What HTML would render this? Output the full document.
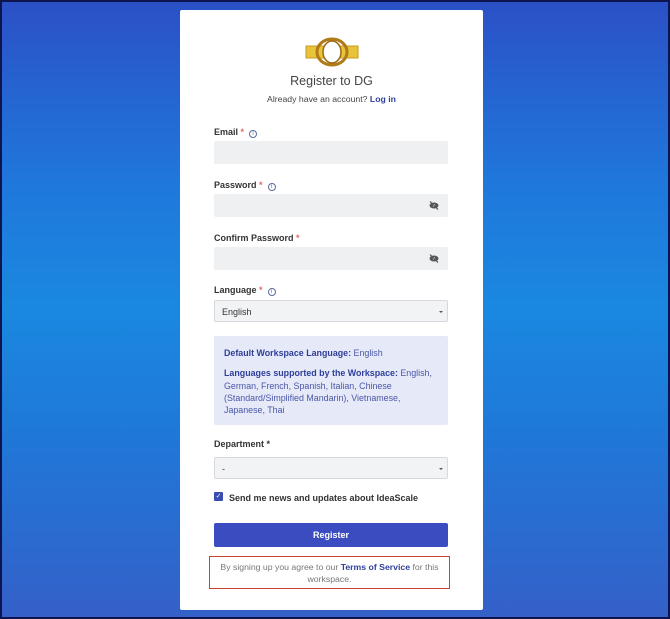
<!DOCTYPE html>
<html><head><style>
*{box-sizing:border-box;margin:0;padding:0}
body{width:670px;height:619px;overflow:hidden;font-family:"Liberation Sans",sans-serif;position:relative;
background:linear-gradient(180deg,#2b50c6 0%,#1f78dc 30%,#1a88e0 50%,#1f78d8 70%,#3460c8 100%);}
.frame{position:absolute;inset:0;border:2px solid #0d1450;}
.card{position:absolute;left:180px;top:10px;width:303px;height:600px;background:#fff;border-radius:2px}
.a{position:absolute}
.lbl{position:absolute;left:214px;font-size:9px;font-weight:bold;color:#333}
.lbl .r{color:#e06a6a}
.lbl .i{display:inline-block;width:8px;height:8px;border:1px solid #5a6a9a;border-radius:50%;font-size:6px;text-align:center;line-height:6px;color:#5a6a9a;margin-left:5px;font-weight:normal;vertical-align:0}
.in{position:absolute;left:214px;width:234px;height:23px;background:#eff0f2;border-radius:2px}
.sel{border:1px solid #d6d8de;background:#f2f3f5;font-size:9px;color:#333;padding:6px 7px}
.car{position:absolute;right:4px;top:10px;width:0;height:0;border-left:2px solid transparent;border-right:2px solid transparent;border-top:2px solid #555}
.eye{position:absolute;right:9px;top:7px}
</style></head><body>
<div class="card"></div>
<svg class="a" style="left:305px;top:37px" width="54" height="30" viewBox="0 0 54 30">
<rect x="1" y="9" width="52" height="12" fill="#e8c43a"/>
<rect x="1" y="9" width="52" height="12" fill="none" stroke="#c89a20" stroke-width="1"/>
<ellipse cx="27" cy="15" rx="15" ry="13" fill="none" stroke="#b07a18" stroke-width="3"/>
<ellipse cx="27" cy="15" rx="9" ry="11" fill="#fff" stroke="#9a6a12" stroke-width="1.5"/>
</svg>
<div class="a" style="left:180px;width:303px;top:74px;text-align:center;font-size:12.5px;color:#444">Register to DG</div>
<div class="a" style="left:180px;width:303px;top:94px;text-align:center;font-size:8.7px;color:#444">Already have an account? <b style="color:#2e3f9a">Log in</b></div>

<div class="lbl" style="top:127px">Email <span class="r">*</span><span class="i">i</span></div>
<div class="in" style="top:141px"></div>
<div class="lbl" style="top:180px">Password <span class="r">*</span><span class="i">i</span></div>
<div class="in" style="top:194px"><svg class="eye" width="10" height="9" viewBox="0 0 10 9"><ellipse cx="5" cy="4.5" rx="4.5" ry="3" fill="#555"/><circle cx="5" cy="4.5" r="1.2" fill="#eee"/><line x1="1" y1="0.5" x2="9" y2="8.5" stroke="#555" stroke-width="1.2"/></svg></div>
<div class="lbl" style="top:233px">Confirm Password <span class="r">*</span></div>
<div class="in" style="top:247px"><svg class="eye" width="10" height="9" viewBox="0 0 10 9"><ellipse cx="5" cy="4.5" rx="4.5" ry="3" fill="#555"/><circle cx="5" cy="4.5" r="1.2" fill="#eee"/><line x1="1" y1="0.5" x2="9" y2="8.5" stroke="#555" stroke-width="1.2"/></svg></div>
<div class="lbl" style="top:285px">Language <span class="r">*</span><span class="i">i</span></div>
<div class="in sel" style="top:300px;height:22px">English<span class="car"></span></div>

<div class="a" style="left:214px;top:336px;width:234px;height:89px;background:#e6e9f8;border-radius:2px;padding:11px 10px;font-size:8.9px;line-height:12.3px;color:#4a57a8">
<div><b style="color:#2e3f9a">Default Workspace Language:</b> English</div>
<div style="margin-top:8px"><b style="color:#2e3f9a">Languages supported by the Workspace:</b> English, German, French, Spanish, Italian, Chinese (Standard/Simplified Mandarin), Vietnamese, Japanese, Thai</div>
</div>

<div class="lbl" style="top:439px">Department *</div>
<div class="in sel" style="top:457px;height:22px">-<span class="car"></span></div>

<div class="a" style="left:214px;top:492px;width:9px;height:9px;background:#3a4cb0;border-radius:1px;color:#fff;font-size:7px;line-height:9px;text-align:center">✓</div>
<div class="a" style="left:229px;top:493px;font-size:9px;font-weight:bold;color:#333">Send me news and updates about IdeaScale</div>

<div class="a" style="left:214px;top:523px;width:234px;height:24px;background:#3a4cc0;border-radius:2px;color:#fff;font-size:9px;font-weight:bold;text-align:center;line-height:24px">Register</div>

<div class="a" style="left:209px;top:556px;width:241px;height:33px;border:1.5px solid #c8423a;text-align:center;font-size:8.7px;color:#777;line-height:12px;padding-top:4px">By signing up you agree to our <b style="color:#2e3f9a">Terms of Service</b> for this<br>workspace.</div>
<div class="frame"></div>
</body></html>
